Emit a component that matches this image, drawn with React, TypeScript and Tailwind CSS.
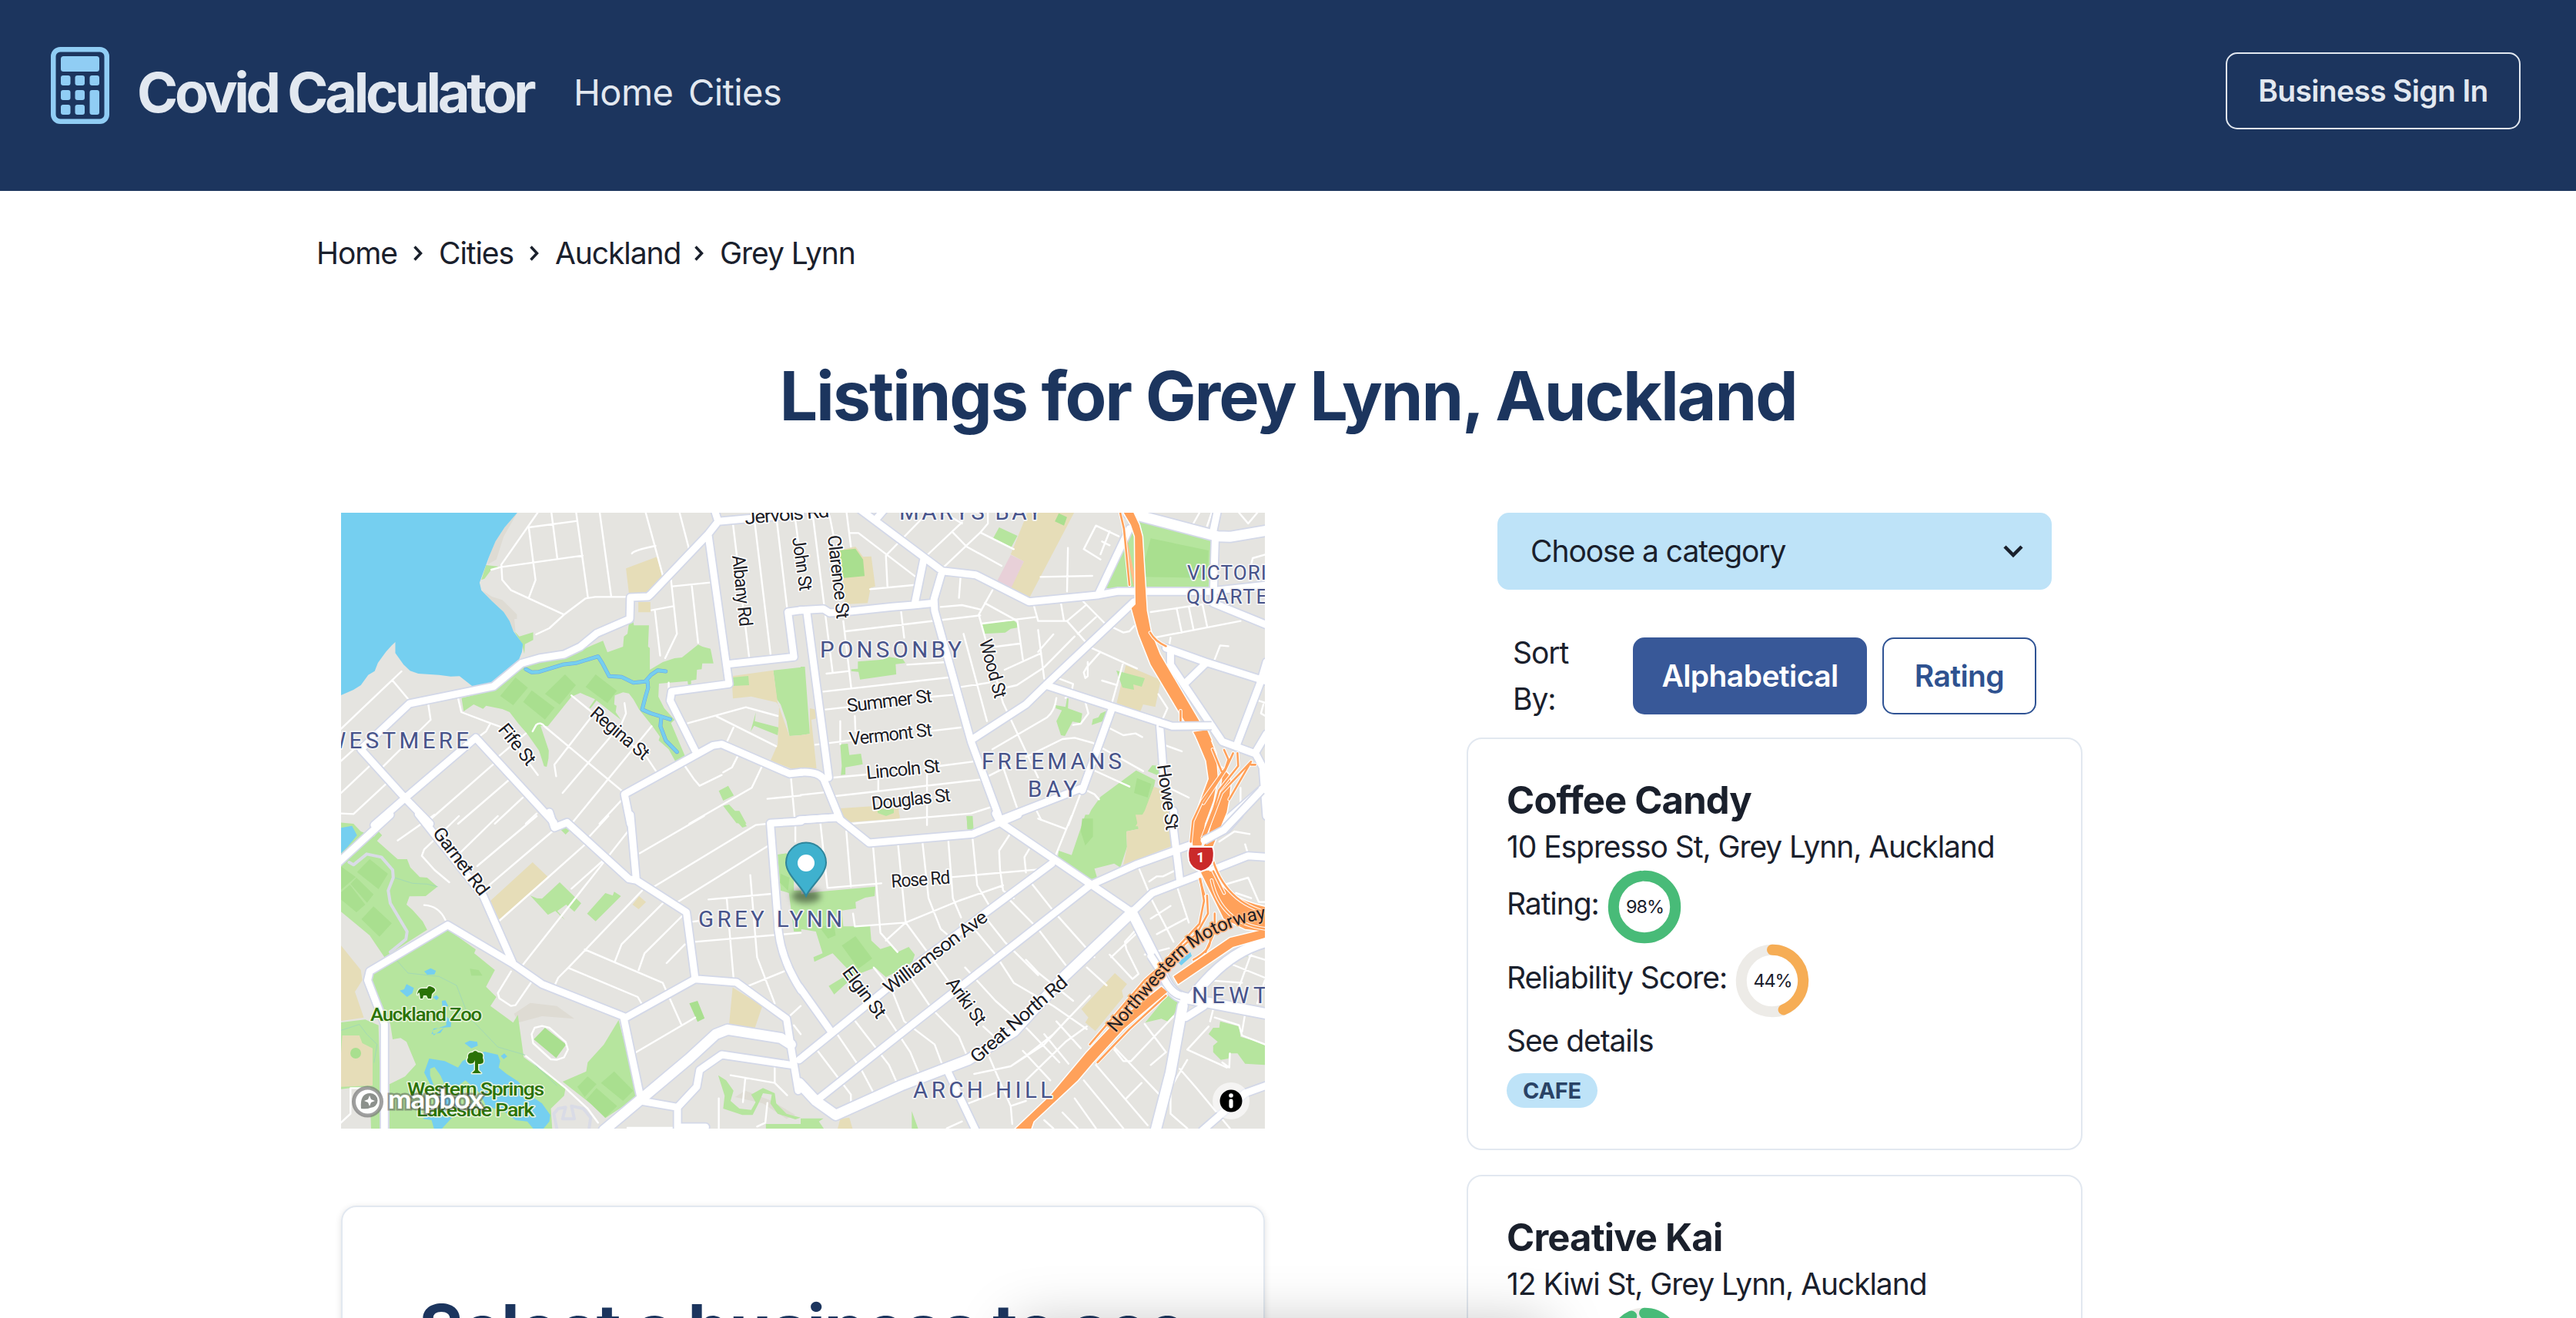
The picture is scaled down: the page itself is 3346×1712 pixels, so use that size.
import React from "react";

type Tile = {
  transform: string;
  school?: string;
  medical?: string;
  shade?: string;
  park?: string;
  pitch?: string;
  patch?: string;
  water?: string;
  stream?: string;
  path?: string;
  brook?: string;
  minor?: string;
  major?: string;
  wide?: string;
  motorway?: string;
  ramp?: string;
  bridge?: string;
};

const tiles: Tile[] = [
  {
    transform: "translate(-3 -6) scale(0.38265 0.33333)",
    water:
      "M0 10H610L606 18L563 75L532 130L510 190L478 290L484 320L520 362L560 405L580 440L593 480L625 530L622 560L610 595L575 632L530 680L455 695L410 655L380 656L340 650L270 645L242 634L220 610L192 565V522L180 535L160 560L133 603L122 635L100 650L75 690L50 708L8 729L0 735Z",
    shade:
      "M520 345L555 358L605 415V432H596L600 480L593 480L580 440L560 405L520 362L488 322Z M606 18L563 75L532 130L510 190L505 220L535 200L560 110Z",
    park: "M417 740L520 712L640 605L760 580L830 550L860 535L897 517L912 562L965 540L968 500L980 490L985 450L1000 442L1002 457H1053L1050 540L1056 545V630L1100 600L1140 585L1165 582L1220 532L1235 540L1262 548L1272 605H1234L1232 628L1216 630L1214 668L1196 672V690H1186L1184 674L1087 684L1085 735L1105 780L1140 825L1128 838L1175 965L1143 988L1120 940L1086 905L1090 890L1065 850L1020 785L1000 745L985 722L965 718L937 730L935 765L943 770L940 795L958 825L875 750L855 780L850 778L870 745L820 720L790 735L710 850L685 848L713 945L712 975L706 1008L697 1006L680 945L640 880L610 840L580 795L555 783L500 770L490 782L458 765L424 792Z M500 222L545 228L518 240L495 275L484 280Z M595 478L613 500L660 484V514L632 530L630 568L622 530Z M1475 632L1570 620V885L1530 888L1520 830L1500 765L1487 745Z M1336 660L1390 654L1393 690L1338 692Z M1416 795L1412 830L1494 855L1490 885L1410 848L1398 870Z M1322 1082L1341 1120L1305 1140L1290 1102Z M1305 1160L1325 1155L1345 1180H1360L1384 1230L1350 1228Z",
    pitch:
      "M600 660L642 700L592 768L548 732Z M655 710L733 778L700 824L626 755Z M768 648L805 690L750 766L700 724Z M872 648L944 712L912 760L838 697Z",
    school:
      "M975 235L1080 190L1098 265L1060 330L985 332Z M1017 366H1058V406H1017Z M1334 655L1475 632L1490 760L1530 888L1570 885V1015L1540 1017L1466 983L1490 920L1492 860L1495 770L1485 757L1400 734L1338 742Z",
    stream:
      "M635 628L655 640L680 638L760 610L805 604L880 578L895 605L918 655L960 658L1000 680L1040 676L1060 650L1083 632L1110 636 M1048 675L1050 700L1040 740L1030 785L1060 800L1125 823 M1095 815L1092 850L1110 905L1148 950",
    minor:
      "M675 18L552 220L555 280L585 320L765 415L838 352L870 346H990 M645 75L810 50 M722 18L742 197 M806 18L846 350 M645 75L668 280L645 350 M518 240L550 230L828 185 M886 18L925 345 M1042 18L1100 262 M1157 18L1188 155 M995 177Q1000 165 1075 147 M765 415L715 468L670 492 M1128 280L1148 490L1108 585 M1133 305L1262 290 M1198 298L1220 525 M1062 398L1136 382 M1073 398L1091 575 M1338 60L1393 580 M1412 55L1466 572 M1487 50L1522 390 M1548 30L1568 200 M213 636L8 860 M183 672L240 750 M304 765L312 825L130 1030 M8 985L80 910 M8 1110L105 1005 M8 1190L50 1192L160 1075 M405 740L416 795L515 838L500 870L465 900 M515 838L555 855L676 1040 M1120 680V720 M790 730L1045 970L1080 1030 M658 870L670 845Q685 830 700 852L975 1115 M635 878L530 980 M525 998L312 1212 M575 1062L405 1230 M625 1128L530 1230 M672 1190L635 1230 M860 810L732 1000L738 1045 M970 760L975 800L960 840L760 1110 M1062 850L790 1230 M965 1132L885 1230 M1175 1005L1205 1055L1225 1082L1300 1040 M1305 1030L1335 1010L1355 965 M1437 1005L1402 1090L1190 1230 M1455 1133L1568 1120 M1535 1050L1548 1215 M1185 838L1382 776L1490 810 M1283 812L1485 928 M1340 855L1318 910",
    major:
      "M1275 5L1288 52L1255 100L1060 335L1050 345L990 348L988 432L875 488L820 540L765 570L680 585L620 605L525 695L240 762L75 940L225 1130L310 1230 M1288 52L1380 42L1568 25 M1255 110L1325 685L1130 715L1125 750L1210 945 M1320 608L1545 580L1525 405L1570 398 M120 1235L225 1130L465 895L730 1225 M970 1115L1270 925L1300 920L1530 1035L1570 1030 M970 1115L990 1230",
  },
  {
    transform: "translate(597 -6) scale(0.39541 0.33333)",
    park: "M652 75L712 108L692 152L632 118Z M595 450L700 438L712 450V466L690 470L672 485L602 490Z M188 598L270 590L290 580L335 588L344 604L312 608L314 648L195 668L190 638L166 635V628L188 626Z M0 618H14L30 880L0 885Z M130 920L155 918L160 962L198 957L204 998L147 1010V1038L132 1040L135 1005Z M1078 632L1132 662L1120 695L1092 688L1095 708L1058 698Z M838 768L870 775L875 742H880L878 780L925 800L920 838L893 832L868 888L855 885L840 830L858 788L838 780Z M1005 790L985 800L978 815L960 822L956 845L998 828Z M1102 1022L1165 1060L1155 1120L1125 1200L1110 1235H930L955 1175L985 1125Z M1140 1025L1155 1002L1180 1005V1045Z M1112 45L1348 128L1340 312L1100 310Z M1075 95L985 312H1100V95Z M255 1175L310 1172L312 1190L285 1200L255 1190Z M545 1200H560L565 1250H548Z",
    pitch:
      "M848 20L875 35L865 68L835 52Z M125 165L180 158L205 200L210 265L137 273Z M1150 118L1340 165L1335 272L1115 268Z M1105 1052L1152 1075L1140 1128L1095 1110Z",
    school:
      "M745 18H898L752 348L688 312L733 208L690 180Z M125 165L180 150L205 190L232 188L245 305L230 310L220 370L145 375L137 273Z M1068 612L1183 670L1165 775L1125 765L1115 795L1038 760Z M30 780L50 785V820L35 825L52 1015L-2 1010V885L30 880Z M130 1170L320 1155L325 1205L145 1225Z M1160 1085L1195 1100L1230 1240H1100L1130 1180Z",
    medical: "M690 182L733 208L690 315L645 285Z",
    minor:
      "M40 30L105 640 M95 30L110 120 M150 10L165 150 M160 97H190L375 265 M395 45L280 185L285 305 M228 316L370 300 M530 55L405 195 M470 18L530 60 M615 18V60L590 95L470 230 M590 95L700 160 M500 95L545 150L660 225 M878 155L875 325 M788 268L958 264 M970 68L930 160L985 200 M970 68L1045 110 M1015 90L985 180 M990 130L1015 145 M525 270L520 350 M630 320L585 415L665 760L780 1050 M590 418L148 480 M460 385L530 378L590 395 M330 405L340 505 M605 370L712 440L730 590 M595 450L770 425 M640 540L720 528 M350 610L480 600 M765 375L780 440L875 440L935 520 M855 370L865 440 M925 360L1000 450L1060 485L1080 480L1095 460 M935 380L875 440 M970 425L910 490 M830 492L780 560 M780 475L800 665 M900 500L800 620L710 690L655 705 M790 565L670 630 M75 715L485 660 M82 785L155 775 M430 735L500 728 M48 922L165 905 M430 868L525 855 M107 1050L220 1038 M455 1005L565 988 M115 1122L590 1058 M0 1118L75 1108 M130 830V920 M178 810L180 870 M535 490L612 830 M525 697L620 680 M85 645L160 635 M140 440L166 700 M840 740Q835 790 810 815L630 940 M590 1060L690 1000 M740 970L860 900L900 895L960 915L1125 1025 M935 755L945 800L920 840L895 845 M955 545L1105 625 M985 560L940 620L930 640L935 662L943 655V600 M1060 600L1020 770 M990 672L1040 690 M850 665L895 685L890 715L870 740 M1175 725L1205 780L1190 820 M1015 858L1060 885L1100 878L1122 892 M1200 925L1252 948 M1150 405L1320 375 M1235 390L1252 485 M1275 385L1290 470 M1320 375L1335 460 M1160 505L1445 440 M1215 505L1210 540 M1405 538L1378 535L1360 590 M1480 220L1485 195L1530 180 M1490 745L1530 760 M1520 765L1512 800L1530 812 M1210 1090L1275 1128 M960 1020L1080 1085 M930 1095L965 1115L980 1135 M920 1110L880 1235 M665 1010L710 1165 M255 1060V1100 M415 1035V1235 M165 1230L560 1190L625 1165 M775 1180L790 1215 M1445 1090V1155 M1310 18L1290 60 M1350 18L1335 70 M1440 18L1470 60L1500 18",
    major:
      "M195 5L465 245L575 260L750 365L980 338L1040 325H1340L1530 300 M275 5L250 40 M405 195L375 370 M465 245L438 355L440 400L560 910L655 1215 M-2 398L75 393L95 408L140 405L300 385L370 378L438 370 M20 405L92 1050 M-2 1030Q55 1025 75 1055L130 1215 M1370 5L1355 90L1362 110L1355 370L1530 455 M1080 80L980 330 M1095 365L805 690L740 765L565 900 M805 690L1220 850L1350 848 M1200 545L1330 600L1530 675 M1330 605L1265 680 M1215 560V610L1385 910L1495 958L1518 1010L1530 1200 M1510 680L1430 930 M1530 600L1510 680 M1530 880L1495 950 M1020 790L925 1100 M655 1215L925 1090 M1180 850L1195 1080 M1225 1180V1240 M1530 1080L1380 1235 M-2 1215L120 1205",
    wide: "M1075 18L1370 110L1410 112L1530 88",
    motorway:
      "M1055 5H1088L1112 65L1122 110L1137 400L1150 480L1180 570L1310 832H1262L1150 610L1110 490L1087 390L1100 375L1098 110L1085 65Z M1290 872L1335 865L1350 905H1305Z",
    ramp: "M1050 20L1062 80L1080 300 M1148 485Q1165 520 1200 538 M1248 790V840",
    bridge: "M1180 835L1220 850L1350 848",
  },
  {
    transform: "translate(-3 394) scale(0.38265 0.33333)",
    park: "M0 25L50 30L75 60L120 80L135 60L147 75L130 97L200 168H232L243 200L275 238L300 240L335 275L295 312L240 313L230 345L250 365L285 410L300 443L155 550L105 465L0 365Z M368 440L465 520L460 535L530 600L500 665L535 705L515 740L592 805L608 775L628 940L770 1060L765 1090L720 1140L725 1225H172V1045L225 1015L262 968L230 880L210 865L183 870L175 810L110 640L115 605Z M0 805L90 793L135 815L145 1225H0Z M750 258L823 340L800 373L772 345L742 370L768 405L735 370L710 385L650 310L672 320L690 322Z M905 300L930 310L935 295L958 312L872 410L843 380Z M765 45L785 55L770 72L755 55Z M950 795L962 850L1020 1090L905 1177L860 1125L760 1035L840 995L845 960L900 890Z M1288 1010L1315 1030L1340 1070L1330 1110L1360 1140L1400 1145L1415 1115L1400 1085L1440 1060L1480 1080L1485 1120L1520 1160L1568 1175L1550 1182L1490 1160L1465 1120L1470 1085L1440 1080L1425 1120L1405 1165L1370 1165L1305 1140L1310 1090Z M1450 1200H1570V1225H1450Z M1490 150L1520 145L1545 200V290H1570V450H1545L1528 300L1500 290Z M1335 0H1365L1385 40L1370 45Z",
    patch: "M0 1065L40 1060H105L110 1225H0Z",
    pitch:
      "M105 168L167 225L135 285L62 218Z M60 240L118 305L96 338L40 265Z M0 190L58 238L0 295Z M0 305L38 268L90 345L60 375L0 318Z M118 352L180 418L138 470L77 402Z M1190 730L1218 720L1242 788L1218 802Z M700 825L772 890L738 943L662 870Z M845 1015L875 1045L835 1095L810 1055Z M935 995L1000 1070L965 1110L890 1040Z M875 1060L945 1130L905 1175L840 1105Z M1500 225L1530 240L1525 290L1498 260Z M445 595L475 600L488 622L450 622Z",
    school:
      "M658 180L710 237L545 405L515 330Z M1020 312L1043 335L1018 363L997 345Z M1337 668L1438 740L1412 828L1325 812Z M0 495L8 505L75 600L80 640L55 685L85 785L0 800Z M12 855H70L80 885L115 905V1050L8 1055H0Z",
    shade:
      "M595 770L650 728L740 740L800 790L690 780L610 805Z M1345 1095L1380 1070L1470 1110L1550 1165L1520 1180L1440 1120Z",
    water:
      "M0 47L45 38L62 75L30 120L8 145H0Z M290 605L312 593L330 603L325 617L300 618Z M207 680L222 675L230 655L255 670L250 690L232 705Z M320 706L332 698L340 708L332 718Z M350 720L362 718L372 740L352 750Z M365 780L382 800L380 822L322 828L315 850L345 845L357 825L322 855L318 835L365 815Z M427 885L445 875L470 880L472 895L450 905Z M550 935L562 925L572 937L560 947Z M307 945L360 955L405 980L420 955L460 930L495 918L540 930L548 955L543 980L570 1005L610 1035L640 1080L690 1120L718 1165L715 1190L690 1225H665L640 1190L600 1185L560 1150L500 1130L480 1080L430 1030L400 1055L380 1090L420 1130L345 1225H325L315 1185L285 1180L330 1140V1080L340 1075L365 1060L345 1010L325 978L310 985V1010L330 1075L310 1045L290 1000Z",
    brook:
      "M190 240L250 262L300 265L335 275 M195 560L235 612L340 625L400 660L440 780L540 900L630 930L740 1050 M8 835L70 812L95 850L130 890L120 960",
    path: "M35 180L50 190L95 148L145 160L183 210L185 240L168 290L175 340L232 450L228 480L175 530 M740 1217L730 1160L745 1140L770 1135L760 1180L800 1180L790 1130L830 1140L855 1175L850 1217",
    minor:
      "M325 -5L200 95 M408 0L290 130L282 155L325 210L375 258 M540 0L415 140 M672 0L470 195 M725 60L505 275 M837 110L545 408 M915 0L838 95 M920 150L790 283 M985 55L625 580 M1030 290L780 590L745 630L735 655 M1100 340L960 500L938 565 M1165 390L1038 535L1018 600 M835 520L1100 650L1162 810 M780 592L1015 705L1030 735 M585 605L540 690L545 710L585 740L600 737L655 645 M290 347Q340 350 362 405 M1240 0L1022 145 M1455 30L1415 35L1070 275 M1455 118L1150 335 M1175 500L1113 573 M1255 325L1470 303 M1397 230L1420 550L1480 730 M1317 320L1340 630 M1198 412L1225 408 M1208 490L1568 455 M1390 662L1512 605 M1210 785L1005 923 M1330 1010L1480 1040L1522 1088 M1380 1022L1372 1115 M1290 1100V1217 M1455 1118L1448 1195L1420 1210 M1480 975V1040 M1550 25V100 M635 935L770 1060L845 1140L880 1195 M690 818L715 825L770 880L778 910L765 940L740 950L720 948L660 885L655 850L665 825Z M980 1215H1150 M1525 785L1568 740 M1545 815L1568 850 M1545 955L1568 925 M105 1060H40V1160L0 1203",
    major:
      "M175 -5L0 180 M270 -8L490 310L590 570 M715 -15L732 45L775 25L985 245L1010 250L1180 375L1210 635L975 785L690 655L590 575L370 425L105 605L98 640L155 810V1230 M990 -5L1010 250 M968 790L1025 1100 M1210 635L1350 648L1520 790L1535 900L1560 1070 M1535 970L1300 930L1225 990L1215 1055L1150 1135V1230 M1025 1110L1150 1135 M1150 1212H1245 M1570 20L1465 28L1490 400Q1490 540 1570 680",
    wide: "M900 1225L1190 945L1280 850L1320 832L1500 865L1535 890",
  },
  {
    transform: "translate(597 394) scale(0.39541 0.33333)",
    park: "M935 -5H1105L1110 50L1070 60L1072 120L1050 200L1030 185L965 205L975 245H940L845 160L848 135L890 152L905 100Z M0 305L60 295L245 275L243 312L212 318L180 335L182 360L135 368L140 430H228L232 485L262 518L298 505L318 530L355 510L375 540L365 575L280 628L245 590L180 620L110 695L92 662L165 610L105 535L45 568L42 550L72 535L50 450L0 440Z M1378 800L1440 820L1445 860L1530 890V970L1460 965L1435 925H1408L1405 945L1380 950L1355 920V895L1370 880L1340 850L1355 825H1375Z M1210 690L1245 735L1225 775L1205 800L1185 790L1132 805Z M365 1150L388 1225H365Z M0 1178H75L60 1190L80 1225H0Z M545 0H565L568 55L548 52Z M1450 540L1468 532V548Z",
    pitch:
      "M180 468L235 555L190 595L135 505Z M60 430L110 425L115 465L90 478Z M925 10H960V80L935 115L920 60Z",
    school:
      "M1100 -5H1220L1235 110L1060 190L1072 120L1070 60L1110 50Z M1032 612L1072 655L1055 680L1060 705L968 838L935 805L945 785L922 752Z M130 -5H325V10L145 25Z M130 1180L160 1175L172 1225H120Z",
    water: "M1240 570L1280 530L1285 545L1250 582Z",
    minor:
      "M65 30L88 280L265 262 M495 238L780 208 M150 60L165 275 M238 120L262 455L318 530 M320 112L345 415L435 560L520 700 M400 100L420 320L460 440L480 460 M485 95L500 320L527 395 M565 90L580 270L620 350 M685 75L652 135L655 210L665 290L700 320 M750 130L735 160L740 220 M180 430L345 415L520 330L665 270 M345 415L280 485 M172 380L178 430 M890 0L835 160 M780 10L870 50 M760 265L830 370L965 550 M685 325L780 440L870 580 M610 400L670 490L780 620 M740 560L780 610L895 720 M570 440L640 540L700 650L830 740L940 830 M540 590L640 720L745 830L850 960 M350 610L430 750L520 860L545 930 M240 590L300 680L340 800L440 890L470 985 M260 740L360 920L395 1020 M180 800L290 970L320 1050 M120 850L200 990L240 1080 M40 890L165 1085V1120 M600 820L655 880 M885 780L800 890L690 975L570 1005 M950 700L830 850L745 930L690 975 M730 915L820 1030 M800 850L880 965 M840 800L920 905 M940 820L870 880L740 1030 M620 940L660 1050L690 1130L695 1200 M550 1120L680 1060 M480 1217L530 1190 M690 1130L740 1110 M1015 540L1090 635L1110 615L1070 520L1065 490L1100 445 M1110 450L1020 550 M940 590L1005 660 M1110 200L1155 330L1225 490 M1235 270L1275 415 M1215 350L1150 400 M1130 540L1210 515 M1265 400L1170 460 M1145 255L1170 235L1190 235L1230 212 M1030 910L1060 955H1085L1225 780 M1130 810L1200 920L1150 970 M970 970L1140 1205 M930 1030L1060 1217 M1030 900L1190 1100 M1120 1040L1070 1100 M900 1100L970 1217 M860 1155L910 1217 M800 1185L830 1217 M1340 820L1270 910L1400 980 M1245 985L1300 1060L1410 1217 M1270 950L1215 1060V1160L1270 1217 M1360 730L1345 800 M1360 785L1440 815L1450 855L1525 890 M1460 770L1450 840 M1400 570L1525 630 M1470 540L1525 560 M1340 640L1450 650 M1480 535L1430 700 M1525 640L1500 730 M1410 925L1408 980L1385 960 M1375 100L1425 60L1475 70 M1385 270L1470 240L1505 335H1525 M1430 300L1480 320 M1460 110L1470 150",
    major:
      "M-5 15L120 5L225 105L565 70L655 25L715 -5 M640 -10L655 25L1088 375 M825 185L400 560L-5 950 M1440 -5L1400 50L1310 100L1100 190L950 270L380 800L50 1110 M1088 375L1155 300L1320 225L1470 155L1530 160 M1225 50L1245 245 M-5 665L100 840 M485 1000L575 1225 M1325 740L1265 785 M1320 1225L1460 1080L1530 1050",
    wide: "M1088 375L870 620L700 840L550 950L330 1050L115 1165L50 1110L-5 1040 M1088 375L1180 590Q1210 700 1265 710L1530 770 M1165 1230L1215 1000L1255 740 M1530 490Q1400 530 1290 700",
    motorway:
      "M700 1225L820 1090L940 920L1020 820L1185 665L1205 685L1060 830L960 960L910 1030L765 1190L755 1225Z M1225 625L1410 475L1530 440V472L1420 510L1240 655Z M1315 220L1350 215Q1390 320 1530 355V450L1460 440L1390 400Z",
    ramp: "M1313 245L1325 330L1310 420L1200 560 M1335 310L1338 380L1300 460L1130 640L950 890 M1360 380V450L1330 530 M1345 480Q1350 520 1290 560 M1200 700L1080 830L975 960 M1345 130Q1380 330 1530 375 M1350 250Q1380 420 1530 440",
    bridge: "M1150 545L1180 600Q1210 690 1250 700",
  },
  {
    transform: "translate(977 294) scale(0.33333)",
    motorway:
      "M400 -10H452L478 55L485 150L468 240L435 330L422 415H388L385 380L395 310L422 230L450 155L440 85Z M500 110L530 140L536 170L530 230L520 285L495 345L465 420H430L450 370L470 300L490 230L502 160Z M420 512H452L480 560L520 605H470Z",
    ramp: "M465 40L500 125 M510 42L527 80L515 115L425 240L388 320L380 400 M545 55L515 120L430 250 M562 55L565 105L490 200L470 270L425 385 M615 88L500 210L470 290L435 380 M615 88L530 235 M615 100H632 M415 545L432 605 M468 515L510 600",
    bridge: "M432 395L508 355L655 200",
  },
];

type Label = { t: string; x: number; y: number; w: number; a: number };

const streets: Label[] = [
  { t: "Jervois Rd", x: 525, y: 15, w: 109, a: -5 },
  { t: "Albany Rd", x: 508, y: 56, w: 92, a: 84 },
  { t: "John St", x: 586, y: 33, w: 69, a: 82 },
  { t: "Clarence St", x: 632, y: 30, w: 108, a: 83.7 },
  { t: "Wood St", x: 829, y: 167, w: 77, a: 75 },
  { t: "Howe St", x: 1060, y: 328, w: 85, a: 82 },
  { t: "Summer St", x: 658, y: 259, w: 110, a: -6.8 },
  { t: "Vermont St", x: 661, y: 302, w: 107, a: -6.5 },
  { t: "Lincoln St", x: 683, y: 346, w: 95, a: -5.5 },
  { t: "Douglas St", x: 690, y: 386, w: 102, a: -6.5 },
  { t: "Rose Rd", x: 715, y: 487, w: 76, a: -4 },
  { t: "Fife St", x: 203, y: 282, w: 61, a: 51 },
  { t: "Regina St", x: 322, y: 263, w: 91, a: 40 },
  { t: "Garnet Rd", x: 118, y: 416, w: 103, a: 53 },
  { t: "Elgin St", x: 650, y: 597, w: 76, a: 53 },
  { t: "Ariki St", x: 785, y: 611, w: 69, a: 54 },
  { t: "Williamson Ave", x: 712, y: 626, w: 161, a: -37 },
  { t: "Great North Rd", x: 826, y: 716, w: 157, a: -41 },
];

const places: (Omit<Label, "a"> & { size: number })[] = [
  { t: "MARYS BAY", x: 725, y: 9, w: 184, size: 29.5 },
  { t: "PONSONBY", x: 622, y: 188, w: 183, size: 29.5 },
  { t: "FREEMANS", x: 832, y: 333, w: 181, size: 29.5 },
  { t: "BAY", x: 892, y: 369, w: 63, size: 29.5 },
  { t: "VICTORIA", x: 1099, y: 87, w: 120, size: 26 },
  { t: "QUARTER", x: 1098, y: 118, w: 122, size: 26 },
  { t: "WESTMERE", x: -20, y: 306, w: 185, size: 29.5 },
  { t: "GREY LYNN", x: 464, y: 538, w: 186, size: 29.5 },
  { t: "ARCH HILL", x: 743, y: 760, w: 180, size: 29.5 },
  { t: "NEWTON", x: 1105, y: 637, w: 148, size: 29.5 },
];

function Layer({ part, fill }: { part: keyof Tile; fill: string }) {
  return (
    <g fill={fill}>
      {tiles.map((t, i) => (t[part] ? <path key={i} d={t[part]} transform={t.transform} /> : null))}
    </g>
  );
}

function Lines({ part, color, width, cap = "round" }: { part: keyof Tile; color: string; width: number; cap?: "round" | "butt" }) {
  return (
    <g fill="none" stroke={color} strokeWidth={width} strokeLinecap={cap} strokeLinejoin="round">
      {tiles.map((t, i) =>
        t[part] ? <path key={i} d={t[part]} transform={t.transform} vectorEffect="non-scaling-stroke" /> : null
      )}
    </g>
  );
}

function CityMap() {
  return (
    <svg viewBox="0 0 1200 800" className="block h-[800px] w-[1200px]" role="img" aria-label="Map">
      <defs>
        <path id="motorway-line" d="M1006 676L1068 604Q1118 540 1203 527" />
        <filter id="pin-shadow" x="-50%" y="-50%" width="200%" height="200%">
          <feGaussianBlur stdDeviation="4" />
        </filter>
      </defs>
      <rect width="1200" height="800" fill="#e5e4e0" />
      <Layer part="shade" fill="#dedbd3" />
      <Layer part="park" fill="#b6e59e" />
      <Layer part="patch" fill="#e5e4e0" />
      <Layer part="school" fill="#e6ddb8" />
      <Layer part="medical" fill="#e8d0d8" />
      <Layer part="pitch" fill="#a9df8f" />
      <g fill="#b6e59e">
        <path d="M508 214L529 212L530 224L509 225Z" />
        <path d="M1007 205L1044 215L1040 226L1029 223L1030 230L1015 227Z" />
        <path d="M697 385H718V390L708 394L697 390Z" />
      </g>
      <ellipse cx="19" cy="702" rx="7" ry="7" fill="#a9df8f" />
      <Layer part="water" fill="#75cff0" />
      <Lines part="brook" color="#a3d9b4" width={1} />
      <Lines part="stream" color="#6a9fe6" width={5} />
      <Lines part="stream" color="#75cff0" width={4} />
      <Lines part="path" color="#d9dbe6" width={4} />
      <Lines part="minor" color="#ffffff" width={2.4} />
      <Lines part="major" color="#d3d8e8" width={12.5} />
      <Lines part="wide" color="#d3d8e8" width={16.5} />
      <Lines part="major" color="#ffffff" width={9} />
      <Lines part="wide" color="#ffffff" width={13} />
      <path d="M1020 30L1034 96L1030 96L1022 60Z" fill="#ffbd8a" />
      <Lines part="motorway" color="#ffffff" width={3} />
      <Layer part="motorway" fill="#ffa15a" />
      <Lines part="ramp" color="#ffffff" width={4.6} />
      <Lines part="ramp" color="#ffa15a" width={2.6} />
      <Lines part="bridge" color="#d3d8e8" width={12.5} cap="butt" />
      <Lines part="bridge" color="#ffffff" width={9} />

      <g
        fontFamily="Roboto, 'Open Sans', sans-serif"
        fontSize="24"
        fill="#1d2026"
        stroke="#ffffff"
        strokeWidth="3.5"
        strokeLinejoin="round"
        paintOrder="stroke"
      >
        {streets.map((s) => (
          <text key={s.t} transform={`translate(${s.x} ${s.y}) rotate(${s.a})`} textLength={s.w} lengthAdjust="spacingAndGlyphs">
            {s.t}
          </text>
        ))}
        <text stroke="#ffb37a" textLength="252">
          <textPath href="#motorway-line" textLength="252">
            Northwestern Motorway
          </textPath>
        </text>
      </g>
      <g
        fontFamily="Roboto, 'Open Sans', sans-serif"
        fill="#47538a"
        stroke="#f4f4f6"
        strokeWidth="3.5"
        strokeLinejoin="round"
        paintOrder="stroke"
      >
        {places.map((p) => (
          <text key={p.t} x={p.x} y={p.y} fontSize={p.size} textLength={p.w}>
            {p.t}
          </text>
        ))}
      </g>
      <g
        fontFamily="Roboto, 'Open Sans', sans-serif"
        fontSize="23.5"
        fontWeight="500"
        fill="#2a7206"
        stroke="#e9f4dd"
        strokeWidth="3"
        strokeLinejoin="round"
        paintOrder="stroke"
      >
        <text x="38" y="660" textLength="144" lengthAdjust="spacingAndGlyphs">Auckland Zoo</text>
        <text x="86" y="757" textLength="177" lengthAdjust="spacingAndGlyphs">Western Springs</text>
        <text x="98" y="784" textLength="152" lengthAdjust="spacingAndGlyphs">Lakeside Park</text>
        <path d="M99 626Q100 617 106 618L112 618Q113 613 118 616Q123 618 122 621L118 625L117 631H113L111 627H107L106 631H103L102 624Q101 622 99 626Z" />
        <path d="M174 711Q172 717 166 715Q162 712 165 708Q164 701 171 701Q174 697 178 701Q186 701 184 708Q187 715 181 716H178L178 724L182 728H170L174 724Z" />
      </g>

      <g>
        <circle cx="34.5" cy="765" r="18" fill="#ffffff" fillOpacity="0.95" stroke="#777777" strokeOpacity="0.7" strokeWidth="5" />
        <path d="M26 774Q24 754 38 754A9.5 9.5 0 0 1 38 773Q34 775 26 774Z" fill="#8c918c" />
        <path d="M37 757L39 762L44 764L39 766L37 771L35 766L30 764L35 762Z" fill="#ffffff" />
        <text
          x="61"
          y="774"
          fontFamily="Lato, sans-serif"
          fontSize="34"
          fontWeight="700"
          fill="#ffffff"
          stroke="#555555"
          strokeOpacity="0.5"
          strokeWidth="5"
          paintOrder="stroke"
          textLength="123"
          lengthAdjust="spacingAndGlyphs"
        >
          mapbox
        </text>
      </g>

      <g>
        <path d="M1102 434H1132Q1135 440 1133 452Q1130 463 1117 466Q1104 463 1101 452Q1099 440 1102 434Z" fill="#ca2a2a" stroke="#ffffff" strokeWidth="2" />
        <text x="1116" y="454" textAnchor="middle" fontFamily="Roboto, sans-serif" fontSize="18" fontWeight="700" fill="#ffffff">
          1
        </text>
      </g>

      <ellipse cx="604" cy="498" rx="19" ry="9" fill="#000000" fillOpacity="0.45" filter="url(#pin-shadow)" />
      <path
        d="M604 498C599 486 578 470 578 454.5A26 26 0 0 1 630 454.5C630 470 609 486 604 498Z"
        fill="#3fb1ce"
        stroke="#2f859b"
        strokeWidth="2"
      />
      <circle cx="604" cy="455" r="11" fill="#ffffff" />

      <circle cx="1156" cy="764" r="24" fill="#ffffff" fillOpacity="0.6" />
      <circle cx="1156" cy="764" r="14.5" fill="#000000" />
      <circle cx="1156" cy="757" r="2.8" fill="#ffffff" />
      <rect x="1153.4" y="761.5" width="5.2" height="12" rx="2.4" fill="#ffffff" />
    </svg>
  );
}

function CalculatorIcon() {
  return (
    <svg viewBox="0 0 76 100" className="mb-[18px] h-[100px] w-[76px] shrink-0" fill="#90cdf4">
      <rect x="3.25" y="3.25" width="69.5" height="93.5" rx="9" fill="none" stroke="#90cdf4" strokeWidth="6.5" />
      <rect x="13" y="12" width="50" height="20" rx="3.5" />
      <rect x="13" y="37" width="12.5" height="13" rx="3" />
      <rect x="31.5" y="37" width="12.5" height="13" rx="3" />
      <rect x="50.5" y="37" width="12.5" height="13" rx="3" />
      <rect x="13" y="56" width="12.5" height="13" rx="3" />
      <rect x="31.5" y="56" width="12.5" height="13" rx="3" />
      <rect x="13" y="75" width="12.5" height="13" rx="3" />
      <rect x="31.5" y="75" width="12.5" height="13" rx="3" />
      <rect x="50.5" y="56" width="12.5" height="32" rx="3" />
    </svg>
  );
}

function Crumb({ children, className }: { children: string; className: string }) {
  return <span className={`whitespace-nowrap ${className}`}>{children}</span>;
}

function Chevron() {
  return (
    <svg viewBox="0 0 12 20" className="mx-[21px] h-5 w-3" fill="none" stroke="#1a202c" strokeWidth="3.5">
      <path d="M1.5 1.5L9.5 10L1.5 18.5" />
    </svg>
  );
}

function Ring({ value, color }: { value: number; color: string }) {
  const r = 40.2;
  const length = 2 * Math.PI * r;
  return (
    <svg viewBox="0 0 96 96" className="h-24 w-24">
      <circle cx="48" cy="48" r={r} fill="none" stroke="#edebe7" strokeWidth="14" />
      <circle
        cx="48"
        cy="48"
        r={r}
        fill="none"
        stroke={color}
        strokeWidth="14"
        strokeLinecap="round"
        strokeDasharray={`${(length * value) / 100} ${length}`}
        transform="rotate(-90 48 48)"
      />
      <text x="48.5" y="56" textAnchor="middle" fontFamily="Inter, sans-serif" fontSize="23.5" fill="#1a202c">
        {value}%
      </text>
    </svg>
  );
}

type Business = {
  name: string;
  address: string;
  rating: number;
  reliability: number;
  category: string;
};

const businesses: Business[] = [
  { name: "Coffee Candy", address: "10 Espresso St, Grey Lynn, Auckland", rating: 98, reliability: 44, category: "CAFE" },
  { name: "Creative Kai", address: "12 Kiwi St, Grey Lynn, Auckland", rating: 93, reliability: 44, category: "CAFE" },
];

function BusinessCard({ b }: { b: Business }) {
  return (
    <article className="h-[536px] rounded-[20px] border-2 border-[#e2e8f0] px-[50px] pt-[50px]">
      <h2 className="text-[49px] leading-[60px] font-bold tracking-[-0.0175em]">{b.name}</h2>
      <p className="leading-[60px]">{b.address}</p>
      <div className="flex h-24 items-center">
        <span className="mb-2 w-[131px] whitespace-nowrap">Rating:</span>
        <Ring value={b.rating} color="#48bb78" />
      </div>
      <div className="flex h-24 items-center">
        <span className="mb-2 w-[297px] whitespace-nowrap">Reliability Score:</span>
        <Ring value={b.reliability} color="#f6ad55" />
      </div>
      <p className="leading-[60px]">See details</p>
      <span className="mt-[12px] flex h-[45px] w-[118px] items-center justify-center rounded-full bg-[#bee3f8] text-[29px] font-bold tracking-[-0.01em] text-[#2a4365]">
        {b.category}
      </span>
    </article>
  );
}

export default function App() {
  return (
    <div className="relative h-[1712px] w-[3346px] overflow-hidden bg-white font-['Inter',sans-serif] text-[39px] tracking-[-0.0275em] text-[#1a202c]">
      <header className="h-[248px] bg-[#1c355e] text-[#e2e8f0]">
        <div className="flex h-[240px] items-center pr-[72px] pl-[66px]">
          <CalculatorIcon />
          <span className="ml-[36px] w-[567px] text-[72px] font-bold tracking-[-0.06em] whitespace-nowrap">Covid Calculator</span>
          <nav className="flex text-[47px] tracking-[-0.0125em]">
            <a className="w-[149px]">Home</a>
            <a>Cities</a>
          </nav>
          <button className="mb-1 ml-auto h-[100px] w-[383px] rounded-[15px] border-2 border-[#e2e8f0] font-semibold tracking-[-0.017em]">
            Business Sign In
          </button>
        </div>
      </header>

      <main>
        <nav className="flex items-center pt-[51px] pl-[411px] leading-[60px]">
          <Crumb className="w-[105px]">Home</Crumb>
          <Chevron />
          <Crumb className="w-[97px]">Cities</Crumb>
          <Chevron />
          <Crumb className="w-[160px]">Auckland</Crumb>
          <Chevron />
          <Crumb className="w-[175px]">Grey Lynn</Crumb>
        </nav>

        <h1 className="mt-[101px] text-center text-[88px] leading-[108px] font-bold tracking-[-0.0245em] text-[#1c355e]">
          Listings for Grey Lynn, Auckland
        </h1>

        <div className="mt-[98px] flex gap-[262px] pl-[443px]">
          <section className="w-[1200px] shrink-0">
            <CityMap />
            <div className="mt-[100px] h-[700px] rounded-[20px] border-2 border-[#e2e8f0] px-[99px] pt-[104px] shadow-[0_2px_8px_rgba(0,0,0,0.12)]">
              <h2 className="text-[88px] leading-[108px] font-bold tracking-[-0.0175em] whitespace-nowrap text-[#1c355e]">
                Select a business to see
              </h2>
            </div>
          </section>

          <section className="w-[800px] shrink-0">
            <button className="mx-10 flex h-[100px] w-[720px] items-center justify-between rounded-[15px] bg-[#bee3f8] pr-[37px] pl-[43px]">
              <span>Choose a category</span>
              <svg viewBox="0 0 26 18" className="h-[18px] w-[26px]" fill="none" stroke="#1a202c" strokeWidth="4.5">
                <path d="M2 3L13 14L24 3" />
              </svg>
            </button>
            <div className="mt-[52px] flex h-[120px] items-center pl-[60px]">
              <p className="w-[156px] pr-10 leading-[60px]">Sort By:</p>
              <button className="h-[100px] w-[304px] rounded-[15px] bg-[#385898] font-semibold tracking-[-0.015em] text-white">
                Alphabetical
              </button>
              <button className="ml-5 h-[100px] w-[200px] rounded-[15px] border-2 border-[#2f5394] font-semibold tracking-[-0.015em] text-[#2f5290]">
                Rating
              </button>
            </div>
            <div className="mt-5 flex flex-col gap-8">
              {businesses.map((b) => (
                <BusinessCard key={b.name} b={b} />
              ))}
            </div>
          </section>
        </div>
      </main>

      <div className="absolute top-[1722px] left-[1320px] h-[100px] w-[690px] shadow-[0_0_75px_rgba(0,0,0,0.25)]" />
    </div>
  );
}
